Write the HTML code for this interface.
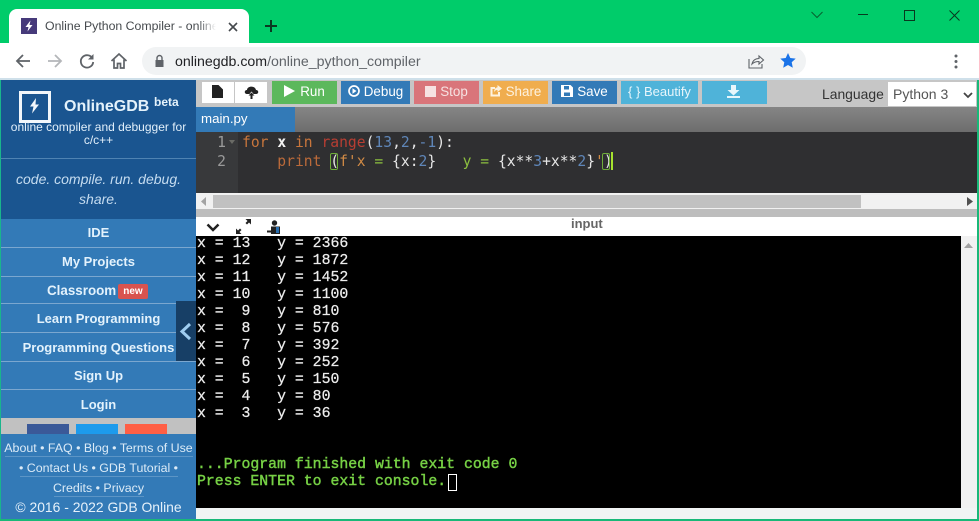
<!DOCTYPE html>
<html><head><meta charset="utf-8"><style>
html,body{margin:0;padding:0;width:979px;height:521px;overflow:hidden;background:#00cc6a;font-family:"Liberation Sans",sans-serif}
.a{position:absolute}
svg{position:absolute;overflow:visible}
.btn{position:absolute;top:81px;height:23px;line-height:21px;color:#fff;font-size:13.4px;text-align:center;box-sizing:border-box;white-space:nowrap}
.btn svg{position:static;vertical-align:-1px;margin-right:4px}
.m{position:absolute;left:1px;width:195px;height:28px;background:#337ab7;color:#e3f2fc;font-weight:bold;font-size:13px;line-height:28px;text-align:center;border-bottom:1px solid #7ba7cf;box-sizing:content-box;white-space:nowrap}
.t{position:absolute;left:197px;font:14.83px/17px "Liberation Mono",monospace;white-space:pre;color:#ededed;-webkit-text-stroke:.25px #ededed}
.g{color:#76d045;-webkit-text-stroke:.45px #76d045}
.c{position:absolute;left:242px;font:14.67px/19px "DejaVu Sans Mono",monospace;white-space:pre;color:#e6e6e6}
.f{position:absolute;left:1px;width:195px;text-align:center;color:#dcebf7;font-size:12.4px;line-height:20px;white-space:nowrap}
.ln{position:absolute;left:196px;width:30px;text-align:right;font:14.67px/19px "DejaVu Sans Mono",monospace;color:#9a9a9a}
</style></head><body>

<!-- browser chrome -->
<div class="a" style="left:0;top:0;width:979px;height:43px;background:#00cc6a"></div>
<div class="a" style="left:9px;top:9px;width:240px;height:34px;background:#fff;border-radius:8px 8px 0 0"></div>
<div class="a" style="left:21px;top:18px;width:16px;height:16px;background:#463a7a"></div>
<svg style="left:21px;top:18px" width="16" height="16" viewBox="0 0 16 16"><path d="M9.500 2.500L4.500 9h3l-1 4.500 5-6.500h-3z" fill="#fff"/></svg>
<div class="a" style="left:45px;top:17px;width:171px;height:18px;overflow:hidden;font-size:12.3px;line-height:18px;color:#45494d;white-space:nowrap">Online Python Compiler - online editor</div>
<div class="a" style="left:198px;top:17px;width:18px;height:18px;background:linear-gradient(90deg,rgba(255,255,255,0),#fff)"></div>
<svg style="left:228px;top:22px" width="10" height="10"><path d="M1 1l8 8M9 1l-8 8" stroke="#45494d" stroke-width="1.600"/></svg>
<svg style="left:265px;top:20px" width="12" height="12"><path d="M6 0v12M0 6h12" stroke="#0c3a22" stroke-width="2"/></svg>
<svg style="left:811px;top:10px" width="12" height="9"><path d="M.5 2l5.500 5.500L11.500 2" fill="none" stroke="#086030" stroke-width="1"/></svg>
<div class="a" style="left:858px;top:14px;width:10px;height:1px;background:#08391f"></div>
<div class="a" style="left:904px;top:10px;width:9px;height:9px;border:1px solid #08391f"></div>
<svg style="left:949px;top:10px" width="11" height="11"><path d="M.5.500l10 10M10.500.500l-10 10" stroke="#08391f" stroke-width="1"/></svg>

<div class="a" style="left:0;top:43px;width:979px;height:36px;background:#fff"></div>
<div class="a" style="left:0;top:78px;width:979px;height:2px;background:#cfe0ea"></div>
<svg style="left:15px;top:53px" width="16" height="16"><path d="M15 8H2M8 2L2 8l6 6" fill="none" stroke="#5f6368" stroke-width="1.800"/></svg>
<svg style="left:47px;top:53px" width="16" height="16"><path d="M1 8h13M8 2l6 6-6 6" fill="none" stroke="#b4b6b9" stroke-width="1.800"/></svg>
<svg style="left:79px;top:53px" width="16" height="16"><path d="M13.500 5.500A6.200 6.200 0 1 0 14.200 9" fill="none" stroke="#5f6368" stroke-width="1.800"/><path d="M14.500 1v5.500H9z" fill="#5f6368"/></svg>
<svg style="left:110px;top:52px" width="18" height="18"><path d="M1.500 9L9 2l7.500 7M4 7.500V16h3.500v-4.500h3V16H14V7.500" fill="none" stroke="#5f6368" stroke-width="1.700"/></svg>
<div class="a" style="left:142px;top:47px;width:664px;height:28px;background:#f1f3f4;border-radius:14px"></div>
<svg style="left:154px;top:54px" width="11" height="13"><path d="M3 6V4a2.500 2.500 0 0 1 5 0v2" fill="none" stroke="#5f6368" stroke-width="1.400"/><rect x="1.500" y="6" width="8" height="7" fill="#5f6368"/></svg>
<div class="a" style="left:175px;top:53px;font-size:14.170px;line-height:18px;color:#5f6368;white-space:nowrap"><span style="color:#202124">onlinegdb.com</span>/online_python_compiler</div>
<svg style="left:748px;top:53px" width="16" height="16"><path d="M1 6v9h13v-4" fill="none" stroke="#5f6368" stroke-width="1.100"/><path d="M4 11c1-4 4-5.500 7-5.500V3l4.500 4-4.500 4V8.500C8 8.500 6 9 4 11z" fill="none" stroke="#5f6368" stroke-width="1.100"/></svg>
<svg style="left:780px;top:53px" width="16" height="15" viewBox="0 0 16 15"><path d="M8 0l2.300 5 5.400.6-4 3.700 1.100 5.400L8 12l-4.800 2.700 1.100-5.400-4-3.700L5.700 5z" fill="#1a73e8"/></svg>
<svg style="left:954px;top:54px" width="4" height="15"><circle cx="2" cy="2" r="1.500" fill="#5f6368"/><circle cx="2" cy="7.500" r="1.500" fill="#5f6368"/><circle cx="2" cy="13" r="1.500" fill="#5f6368"/></svg>

<!-- sidebar -->
<div class="a" style="left:0;top:80px;width:1px;height:441px;background:#19b58c"></div>
<div class="a" style="left:1px;top:80px;width:195px;height:139px;background:#1a5590"></div>
<div class="a" style="left:1px;top:158px;width:195px;height:1px;background:#4f83b2"></div>
<div class="a" style="left:19px;top:91px;width:26px;height:26px;border:3px solid #f2f7fb"></div>
<svg style="left:29px;top:98px" width="11" height="16" viewBox="0 0 11 16"><path d="M7 0L1 8.500h3.500L3 15.500 10 6.500H6.500z" fill="#f2f7fb"/></svg>
<div class="a" style="left:64px;top:97px;font-weight:bold;font-size:16px;line-height:20px;color:#e4f2fb;white-space:nowrap">OnlineGDB</div>
<div class="a" style="left:154px;top:95px;font-weight:bold;font-size:12px;line-height:15px;color:#e4f2fb">beta</div>
<div class="a" style="left:1px;top:121px;width:195px;text-align:center;font-size:12px;line-height:13px;color:#e1effa">online compiler and debugger for<br>c/c++</div>
<div class="a" style="left:1px;top:169px;width:195px;text-align:center;font-size:14px;line-height:20px;font-style:italic;color:#c5dcf0">code. compile. run. debug.<br>share.</div>

<div class="a" style="left:1px;top:219px;width:195px;height:199px;background:#337ab7"></div>
<div class="m" style="top:219px;height:27.500px">IDE</div>
<div class="m" style="top:248px">My Projects</div>
<div class="m" style="top:277px;height:26px"></div>
<div class="a" style="left:47px;top:282px;font-weight:bold;font-size:13.400px;line-height:18px;color:#e3f2fc">Classroom</div>
<div class="a" style="left:118px;top:284px;width:30px;height:15px;background:#d9534f;color:#fff;font-size:10px;font-weight:bold;line-height:15px;text-align:center;border-radius:2px">new</div>
<div class="m" style="top:305px;height:27px">Learn Programming</div>
<div class="m" style="top:333px;line-height:29px">Programming Questions</div>
<div class="m" style="top:362px;height:27px">Sign Up</div>
<div class="m" style="top:390px;height:28px;line-height:30px;border-bottom:0">Login</div>
<div class="a" style="left:176px;top:301px;width:20px;height:60px;background:#173f66"></div>
<svg style="left:179px;top:322px" width="13" height="19"><path d="M11 2L3 9.500l8 7.500" fill="none" stroke="#9fcdf0" stroke-width="3"/></svg>

<div class="a" style="left:1px;top:418px;width:195px;height:16px;background:#c1c1c1"></div>
<div class="a" style="left:27px;top:424px;width:42px;height:10px;background:#3b5998"></div>
<div class="a" style="left:76px;top:424px;width:42px;height:10px;background:#1d9bec"></div>
<div class="a" style="left:125px;top:424px;width:42px;height:10px;background:#ff5f45"></div>
<div class="a" style="left:1px;top:434px;width:195px;height:85px;background:#337ab7"></div>
<div class="f" style="top:438px">About • FAQ • Blog • Terms of Use</div>
<div class="a" style="left:5px;top:456px;width:188px;height:1px;background:#5c95c6"></div>
<div class="f" style="top:458px">• Contact Us • GDB Tutorial •</div>
<div class="a" style="left:20px;top:476px;width:158px;height:1px;background:#5c95c6"></div>
<div class="f" style="top:478px">Credits • Privacy</div>
<div class="a" style="left:54px;top:496px;width:90px;height:1px;background:#5c95c6"></div>
<div class="f" style="top:497px;font-size:13.900px;line-height:21px;color:#e6f1fa">© 2016 - 2022 GDB Online</div>

<!-- toolbar -->
<div class="a" style="left:196px;top:80px;width:781px;height:27px;background:#c6c6c6"></div>
<div class="a" style="left:202px;top:82px;width:32px;height:21px;background:#fff"></div>
<div class="a" style="left:235px;top:82px;width:32px;height:21px;background:#fff"></div>
<svg style="left:212px;top:85px" width="11" height="13"><path d="M0 0h6.500L11 4.500V13H0z" fill="#222"/></svg>
<svg style="left:244px;top:85px" width="15" height="14"><path d="M3 9C0 9 0 5 3 5c0-4 8-5 9 0 3 0 3 4 0 4h-2.500L7.500 6.500 5.500 9z" fill="#222"/><path d="M7.500 7.500L10.500 10.500H8.500V14h-2V10.500H4.500z" fill="#222"/></svg>
<div class="btn" style="left:272px;width:65px;background:#5cb85c"><svg width="12" height="12"><path d="M0 0l11 6-11 6z" fill="#fff"/></svg>Run</div>
<div class="btn" style="left:341px;width:69px;background:#337ab7"><svg width="12" height="12"><circle cx="6" cy="6" r="5" fill="none" stroke="#fff" stroke-width="1.700"/><path d="M4.500 3.200l4 2.800-4 2.800z" fill="#fff"/></svg>Debug</div>
<div class="btn" style="left:414px;width:65px;background:#d9757a;color:#f6e2e2"><svg width="11" height="11"><rect width="11" height="11" fill="#f6e2e2"/></svg>Stop</div>
<div class="btn" style="left:483px;width:65px;background:#f0ad4e;color:#fdf2e0"><svg width="12" height="12"><path d="M9 7v3.500H1.500V3H5" fill="none" stroke="#fdf2e0" stroke-width="2"/><path d="M7.500 0L12 3.500 7.500 7V5C5.500 5 4.500 6 4 7.500 4 4.500 5.500 2.500 7.500 2.200z" fill="#fdf2e0"/></svg>Share</div>
<div class="btn" style="left:552px;width:65px;background:#337ab7"><svg width="12" height="12"><path d="M0 0h9.500L12 2.500V12H0z" fill="#fff"/><rect x="3" y="1" width="5" height="3.500" fill="#337ab7"/><rect x="3" y="7.500" width="6" height="3.500" fill="#337ab7"/></svg>Save</div>
<div class="btn" style="left:621px;width:77px;background:#4fb3d9;color:#e6f5fb;font-size:13px">{ } Beautify</div>
<div class="btn" style="left:702px;width:65px;background:#4fb3d9"></div>
<svg style="left:727px;top:85px" width="13" height="13"><path d="M4 0h5v5h3.500L6.500 10.500 .5 5H4z" fill="#e8f6fb"/><rect x="0" y="11" width="13" height="2" fill="#e8f6fb"/></svg>
<div class="a" style="left:822px;top:85px;font-size:13.900px;line-height:18px;color:#333">Language</div>
<div class="a" style="left:888px;top:82px;width:88px;height:24px;background:#fff;font-size:14px;line-height:24px;color:#555;text-indent:5px">Python 3</div>
<svg style="left:963px;top:92px" width="10" height="6"><path d="M1 1l4 4 4-4" fill="none" stroke="#444" stroke-width="1.800"/></svg>

<!-- tabs -->
<div class="a" style="left:196px;top:107px;width:781px;height:25px;background:linear-gradient(#858585,#6d6d6d)"></div>
<div class="a" style="left:196px;top:107px;width:99px;height:25px;background:#337ab7;color:#fff;font-size:13.300px;line-height:24px;text-indent:5px">main.py</div>

<!-- editor -->
<div class="a" style="left:196px;top:132px;width:781px;height:61px;background:#2f2f31"></div>
<div class="a" style="left:196px;top:132px;width:42px;height:61px;background:#38393b"></div>
<div class="ln" style="top:133px">1</div>
<div class="ln" style="top:152px">2</div>
<svg style="left:229px;top:140px" width="6" height="4"><path d="M0 0h6L3 4z" fill="#6a6b66"/></svg>
<div class="c" style="top:133px"><span style="color:#c9763c">for</span> <span style="color:#f2f2f2;font-weight:bold">x</span> <span style="color:#c9763c">in</span> <span style="color:#b83e33">range</span>(<span style="color:#5f86b8">13</span>,<span style="color:#5f86b8">2</span>,<span style="color:#5f86b8">-1</span>):</div>
<div class="c" style="top:152px">    <span style="color:#bb6a3a">print</span> (<span style="color:#d08a45">f'x</span> <span style="color:#8cbf3f">=</span> {x:<span style="color:#5f86b8">2</span>}   <span style="color:#8cbf3f">y</span> <span style="color:#8cbf3f">=</span> {x**<span style="color:#5f86b8">3</span>+x**<span style="color:#5f86b8">2</span>}<span style="color:#d08a45">'</span>)</div>
<div class="a" style="left:330px;top:153px;width:8px;height:17px;border:1px solid #6fae3a;border-radius:2px;box-sizing:border-box"></div>
<div class="a" style="left:602px;top:153px;width:8px;height:17px;border:1px solid #6fae3a;border-radius:2px;box-sizing:border-box"></div>
<div class="a" style="left:611px;top:152px;width:2px;height:18px;background:#a6e22e"></div>

<!-- h scroll -->
<div class="a" style="left:196px;top:193px;width:781px;height:16px;background:#f1f1f1"></div>
<div class="a" style="left:213px;top:195px;width:648px;height:13px;background:#c1c1c1"></div>
<svg style="left:201px;top:197px" width="6" height="9"><path d="M5 0v9L0 4.500z" fill="#a3a3a3"/></svg>
<svg style="left:967px;top:197px" width="6" height="9"><path d="M0 0v9l6-4.500z" fill="#505050"/></svg>
<div class="a" style="left:196px;top:209px;width:781px;height:8px;background:#bdbdbd"></div>

<!-- terminal header -->
<div class="a" style="left:196px;top:217px;width:781px;height:19px;background:#fff"></div>
<svg style="left:206px;top:223px" width="14" height="9"><path d="M1.500 1.500L7 7l5.500-5.500" fill="none" stroke="#222" stroke-width="2.500"/></svg>
<svg style="left:236px;top:219px" width="15" height="15"><path d="M9.500 0H15v5.500l-2-2-2 2-1.500-1.500 2-2zM5.500 15H0V9.500l2 2 2-2 1.500 1.500-2 2z" fill="#222"/></svg>
<svg style="left:267px;top:220px" width="13" height="14"><circle cx="7.500" cy="3" r="2.700" fill="#222"/><path d="M4 6.500h9V14H4zM0 10.500h4v2H0z" fill="#222"/><rect x="9" y="7" width="3" height="6" fill="#2a6fb0"/></svg>
<div class="a" style="left:571px;top:216px;font-weight:bold;font-size:13px;line-height:16px;color:#666">input</div>

<!-- terminal -->
<div class="a" style="left:196px;top:236px;width:765px;height:272px;background:#000"></div>
<div class="a" style="left:961px;top:236px;width:16px;height:272px;background:#f1f1f1"></div>
<svg style="left:964px;top:243px" width="9" height="5"><path d="M0 5l4.500-5L9 5z" fill="#a3a3a3"/></svg>
<div class="a" style="left:196px;top:508px;width:781px;height:11px;background:#f1f4f4"></div>
<div class="t" style="top:236px">x = 13   y = 2366</div>
<div class="t" style="top:253px">x = 12   y = 1872</div>
<div class="t" style="top:270px">x = 11   y = 1452</div>
<div class="t" style="top:287px">x = 10   y = 1100</div>
<div class="t" style="top:304px">x =  9   y = 810</div>
<div class="t" style="top:321px">x =  8   y = 576</div>
<div class="t" style="top:338px">x =  7   y = 392</div>
<div class="t" style="top:355px">x =  6   y = 252</div>
<div class="t" style="top:372px">x =  5   y = 150</div>
<div class="t" style="top:389px">x =  4   y = 80</div>
<div class="t" style="top:406px">x =  3   y = 36</div>
<div class="t g" style="top:457px">...Program finished with exit code 0</div>
<div class="t g" style="top:474px">Press ENTER to exit console.</div>
<div class="a" style="left:448px;top:474px;width:9px;height:17px;border:1px solid #fff;box-sizing:border-box"></div>

<!-- window edges -->
<div class="a" style="left:977px;top:80px;width:2px;height:441px;background:#19b878"></div>
<div class="a" style="left:0;top:519px;width:979px;height:2px;background:#19b878"></div>
</body></html>
